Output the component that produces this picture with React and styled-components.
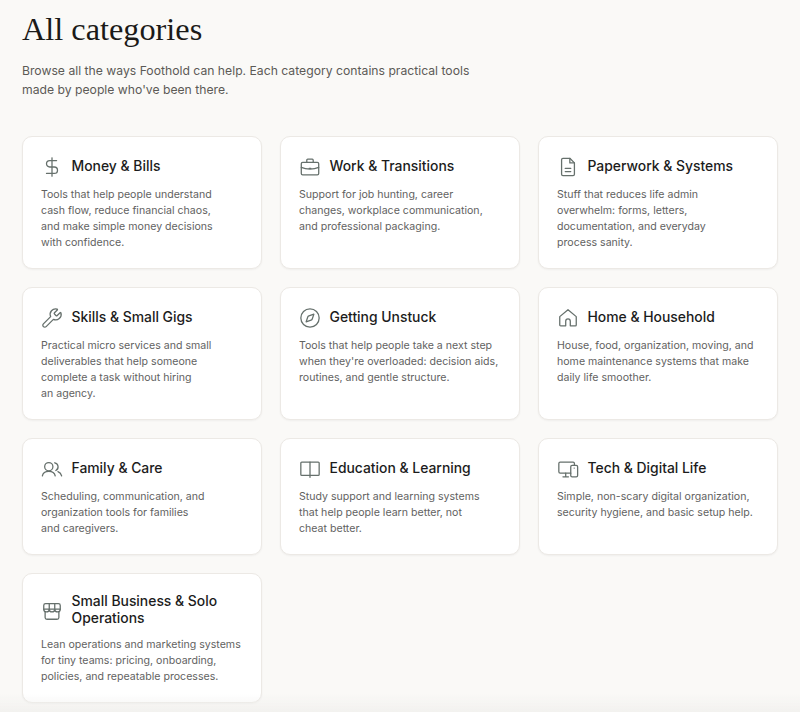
import React from "react";
import styled, { createGlobalStyle } from "styled-components";
import { DollarSign, Wrench, Compass } from "lucide-react";

const Glyph = styled.svg.attrs({
  viewBox: "0 0 24 24",
  fill: "none",
  stroke: "currentColor",
  strokeWidth: 1.4,
  strokeLinecap: "round",
  strokeLinejoin: "round",
})`
  width: 22px;
  height: 22px;
`;

const BriefcaseIcon = () => (
  <Glyph>
    <rect x="2.500" y="7" width="19" height="13.500" rx="1.500" />
    <path d="M8.500 7V4.500a1 1 0 0 1 1-1h5a1 1 0 0 1 1 1V7" />
    <path d="M2.500 12.500c3 1.300 6 1.800 9.500 1.800s6.500-.5 9.500-1.800" />
    <path d="M11 13.500h2" />
  </Glyph>
);

const PaperIcon = () => (
  <Glyph>
    <path d="M14 2.500H6.500a1.500 1.500 0 0 0-1.500 1.500v16a1.500 1.500 0 0 0 1.500 1.500h11a1.500 1.500 0 0 0 1.500-1.500V7.500z" />
    <path d="M14 2.500v5h5" />
    <path d="M9 13.500h6M9 17h6" />
  </Glyph>
);

const HomeIcon = () => (
  <Glyph>
    <path d="M3 19.500V10.500L12 3l9 7.500v9a1 1 0 0 1-1 1h-5.500v-5a2.500 2.500 0 0 0-5 0v5H4a1 1 0 0 1-1-1z" />
  </Glyph>
);

const FamilyIcon = () => (
  <Glyph>
    <circle cx="8.500" cy="9.500" r="4.500" />
    <path d="M1.500 19.500c.6-3.200 3.400-5 7-5s6.400 1.800 7 5" />
    <path d="M15 5.200a4.500 4.500 0 0 1 1.200 8.400" />
    <path d="M18.500 14.800c2.100.8 3.500 2.500 4 4.700" />
  </Glyph>
);

const BookIcon = () => (
  <Glyph>
    <path d="M12 4.500H3a1 1 0 0 0-1 1v12.500a1 1 0 0 0 1 1h18a1 1 0 0 0 1-1V5.500a1 1 0 0 0-1-1z" />
    <path d="M12 4.500v16.500" />
  </Glyph>
);

const DevicesIcon = () => (
  <Glyph>
    <path d="M15 16.500H3.500a1.500 1.500 0 0 1-1.500-1.500V6a1.500 1.500 0 0 1 1.500-1.500h14A1.500 1.500 0 0 1 19 6v1.500" />
    <path d="M6.500 20.500h6M9.500 16.500v4" />
    <rect x="15" y="8" width="7.500" height="12.500" rx="1.500" />
    <path d="M18.700 11h.1" />
  </Glyph>
);

const StoreIcon = () => (
  <Glyph>
    <path d="M3 10V6a2 2 0 0 1 2-2h14a2 2 0 0 1 2 2v4" />
    <path d="M3 10a3 3 0 0 0 6 0 3 3 0 0 0 6 0 3 3 0 0 0 6 0z" />
    <path d="M9 4v6M15 4v6" />
    <path d="M4.500 13v6a2 2 0 0 0 2 2h11a2 2 0 0 0 2-2v-6" />
  </Glyph>
);

const DollarIcon = () => <DollarSign size={22} strokeWidth={1.4} />;
const WrenchIcon = () => <Wrench size={22} strokeWidth={1.4} />;
const CompassIcon = () => <Compass size={22} strokeWidth={1.4} />;

const categories = [
  { title: "Money & Bills", Icon: DollarIcon, text: "Tools that help people understand cash flow, reduce financial chaos, and make simple money decisions with confidence." },
  { title: "Work & Transitions", Icon: BriefcaseIcon, text: "Support for job hunting, career changes, workplace communication, and professional packaging." },
  { title: "Paperwork & Systems", Icon: PaperIcon, text: "Stuff that reduces life admin overwhelm: forms, letters, documentation, and everyday process sanity." },
  { title: "Skills & Small Gigs", Icon: WrenchIcon, text: "Practical micro services and small deliverables that help someone complete a task without hiring an agency." },
  { title: "Getting Unstuck", Icon: CompassIcon, text: "Tools that help people take a next step when they're overloaded: decision aids, routines, and gentle structure." },
  { title: "Home & Household", Icon: HomeIcon, text: "House, food, organization, moving, and home maintenance systems that make daily life smoother." },
  { title: "Family & Care", Icon: FamilyIcon, text: "Scheduling, communication, and organization tools for families and caregivers." },
  { title: "Education & Learning", Icon: BookIcon, text: "Study support and learning systems that help people learn better, not cheat better." },
  { title: "Tech & Digital Life", Icon: DevicesIcon, text: "Simple, non-scary digital organization, security hygiene, and basic setup help." },
  { title: "Small Business & Solo Operations", Icon: StoreIcon, text: "Lean operations and marketing systems for tiny teams: pricing, onboarding, policies, and repeatable processes." },
];

const GlobalStyle = createGlobalStyle`
  html, body {
    margin: 0;
    background: #faf9f7;
  }
  * {
    box-sizing: border-box;
  }
`;

const Page = styled.div`
  height: 712px;
  overflow: hidden;
  padding: 9px 22px 0;
  font-family: Inter, "Liberation Sans", sans-serif;
`;

const Heading = styled.h1`
  margin: 0;
  font-family: "Liberation Serif", serif;
  font-size: 32.3px;
  line-height: 40px;
  font-weight: 400;
  color: #1b1a18;
`;

const Intro = styled.p`
  margin: 12px 0 37px;
  max-width: 470px;
  font-size: 12.2px;
  line-height: 19px;
  color: #5c5a56;
`;

const Grid = styled.div`
  display: grid;
  grid-template-columns: repeat(3, 240px);
  gap: 18px;
`;

const Card = styled.div`
  background: #ffffff;
  border: 1px solid #ece9e5;
  border-radius: 10px;
  padding: 19px 18px 17px;
  box-shadow: 0 1px 2px rgba(40, 35, 30, 0.05);
`;

const CardHead = styled.div`
  display: flex;
  align-items: center;
  gap: 8.5px;
  margin-bottom: 9px;
`;

const CardIcon = styled.span`
  display: flex;
  flex: none;
  color: #66706c;
`;

const CardTitle = styled.h2`
  margin: 0 0 1px;
  font-size: 13.9px;
  line-height: 17px;
  font-weight: 500;
  color: #1c1c1c;
`;

const CardText = styled.p`
  margin: 0;
  font-size: 10.6px;
  line-height: 16px;
  color: #62625f;
  text-wrap: pretty;
`;

const BottomFade = styled.div`
  position: fixed;
  left: 0;
  right: 0;
  bottom: 0;
  height: 18px;
  pointer-events: none;
  background: linear-gradient(to bottom, rgba(240, 239, 237, 0), rgba(240, 239, 237, 0.8));
`;

export default function App() {
  return (
    <Page>
      <GlobalStyle />
      <Heading>All categories</Heading>
      <Intro>
        Browse all the ways Foothold can help. Each category contains practical tools made by
        people who've been there.
      </Intro>
      <Grid>
        {categories.map(({ title, Icon, text }) => (
          <Card key={title}>
            <CardHead>
              <CardIcon>
                <Icon />
              </CardIcon>
              <CardTitle>{title}</CardTitle>
            </CardHead>
            <CardText>{text}</CardText>
          </Card>
        ))}
      </Grid>
      <BottomFade />
    </Page>
  );
}
